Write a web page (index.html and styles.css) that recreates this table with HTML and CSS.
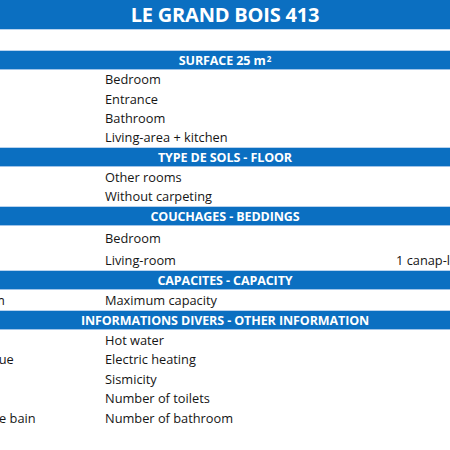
FILE: index.html
```html
<!DOCTYPE html>
<html lang="fr">
<head>
<meta charset="utf-8">
<title>Le Grand Bois 413</title>
<link rel="stylesheet" href="styles.css">
</head>
<body>
<div class="sheet">
  <div class="title">LE GRAND BOIS 413</div>
  <div class="blank"></div>

  <div class="bar">SURFACE 25 m<sup>2</sup></div>
  <div class="row s1"><span class="fr"></span><span class="en">Bedroom</span><span class="val"></span></div>
  <div class="row s1"><span class="fr"></span><span class="en">Entrance</span><span class="val"></span></div>
  <div class="row s1"><span class="fr"></span><span class="en">Bathroom</span><span class="val"></span></div>
  <div class="row s1"><span class="fr"></span><span class="en">Living-area + kitchen</span><span class="val"></span></div>

  <div class="bar">TYPE DE SOLS - FLOOR</div>
  <div class="row"><span class="fr"></span><span class="en">Other rooms</span><span class="val"></span></div>
  <div class="row"><span class="fr"></span><span class="en">Without carpeting</span><span class="val"></span></div>

  <div class="bar">COUCHAGES - BEDDINGS</div>
  <div class="row tall"><span class="fr"></span><span class="en">Bedroom</span><span class="val"></span></div>
  <div class="row tall"><span class="fr"></span><span class="en">Living-room</span><span class="val">1 canap-lit</span></div>

  <div class="bar">CAPACITES - CAPACITY</div>
  <div class="row one"><span class="fr">Capacité maximum</span><span class="en">Maximum capacity</span><span class="val"></span></div>

  <div class="bar">INFORMATIONS DIVERS - OTHER INFORMATION</div>
  <div class="row s5"><span class="fr"></span><span class="en">Hot water</span><span class="val"></span></div>
  <div class="row s5"><span class="fr">Chauffage électrique</span><span class="en">Electric heating</span><span class="val"></span></div>
  <div class="row s5"><span class="fr"></span><span class="en">Sismicity</span><span class="val"></span></div>
  <div class="row s5"><span class="fr"></span><span class="en">Number of toilets</span><span class="val"></span></div>
  <div class="row s5"><span class="fr">Nombre de salle de bain</span><span class="en">Number of bathroom</span><span class="val"></span></div>
</div>
</body>
</html>
```
FILE: styles.css
```css
html, body {
  margin: 0;
  padding: 0;
  background: #ffffff;
}
body {
  width: 450px;
  height: 450px;
  overflow: hidden;
  font-family: "Open Sans", "Liberation Sans", sans-serif;
  color: #151515;
}
.sheet {
  width: 670px;
  margin-left: -110px;
  display: flex;
  flex-direction: column;
}
.title {
  height: 30px;
  box-sizing: border-box;
  background: #0b6fc1;
  border-bottom: 1px solid #b9d3ee;
  color: #ffffff;
  font-weight: 700;
  font-size: 20px;
  display: flex;
  align-items: center;
  justify-content: center;
  letter-spacing: -0.2px;
}
.blank {
  height: 20px;
}
.bar {
  height: 20px;
  box-sizing: border-box;
  background: #0b6fc1;
  border-top: 1px solid #b9d3ee;
  border-bottom: 1px solid #9fc3e8;
  color: #ffffff;
  font-weight: 700;
  font-size: 12.5px;
  display: flex;
  align-items: center;
  justify-content: center;
  letter-spacing: -0.1px;
}
.bar sup {
  font-size: 8px;
  line-height: 0;
  position: relative;
  top: -1px;
  margin-left: 1px;
}
.row {
  display: grid;
  grid-template-columns: 213px 291px 1fr;
  height: 19.5px;
  align-items: end;
  font-size: 12.8px;
  line-height: 17px;
}
.row.s1 {
  height: 19.25px;
}
.row.tall {
  height: 22px;
}
.row.one {
  height: 20px;
}
.row.s5 {
  height: 19.6px;
}
.row span {
  padding: 0 2px 1px;
  white-space: nowrap;
}
.row .fr {
  padding-left: 0;
}
```
